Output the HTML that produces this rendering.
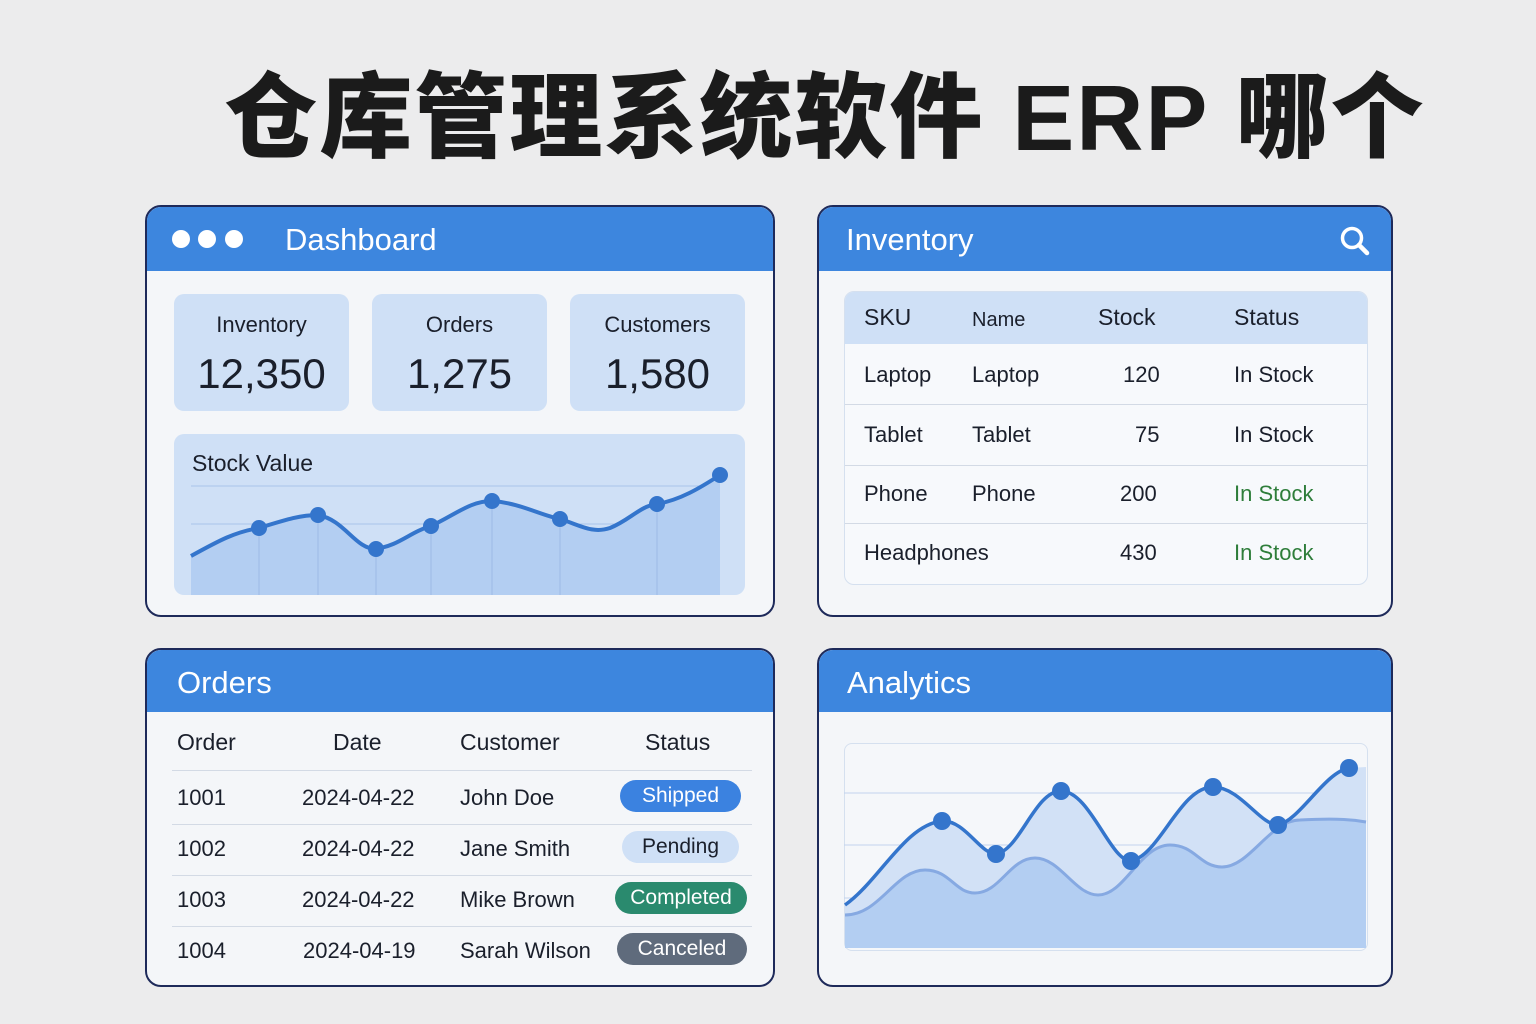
<!DOCTYPE html>
<html><head><meta charset="utf-8"><style>
*{margin:0;padding:0;box-sizing:border-box}
body{width:1536px;height:1024px;background:#ececed;font-family:"Liberation Sans","Noto Sans CJK SC",sans-serif;position:relative;overflow:hidden;color:#1a1f2b}
.abs{position:absolute}
h1{position:absolute;left:0;width:1650px;text-align:center;top:42px;font-size:93px;font-weight:900;color:#1b1b1b;letter-spacing:2px;font-family:"Liberation Sans","Noto Sans CJK SC",sans-serif;white-space:nowrap}
.card{position:absolute;background:#f4f6f9;border:2px solid #1e2a5a;border-radius:16px;overflow:hidden}
.hd{position:absolute;left:0;top:0;right:0;height:64px;background:#3d86de;color:#fff;font-size:31px;line-height:66px}
.t{position:absolute;white-space:nowrap}
.stat{position:absolute;top:294px;width:175px;height:117px;background:#cfe0f6;border-radius:10px;text-align:center}
.stat .l{font-size:22px;margin-top:18px}
.stat .v{font-size:42px;margin-top:12px}
.badge{position:absolute;height:32px;border-radius:16px;color:#fff;font-size:21px;text-align:center;line-height:32px}
.r{font-size:22px}
</style></head><body>
<h1>仓库管理系统软件 ERP 哪个</h1>

<!-- Dashboard -->
<div class="card" style="left:145px;top:205px;width:630px;height:412px">
<div class="hd"><span style="position:absolute;left:138px">Dashboard</span>
<span style="position:absolute;left:25px;top:23px;width:18px;height:18px;border-radius:50%;background:#fff"></span>
<span style="position:absolute;left:51px;top:23px;width:18px;height:18px;border-radius:50%;background:#fff"></span>
<span style="position:absolute;left:78px;top:23px;width:18px;height:18px;border-radius:50%;background:#fff"></span></div>
</div>
<div class="stat" style="left:174px"><div class="l">Inventory</div><div class="v">12,350</div></div>
<div class="stat" style="left:372px"><div class="l">Orders</div><div class="v">1,275</div></div>
<div class="stat" style="left:570px"><div class="l">Customers</div><div class="v">1,580</div></div>
<div class="abs" style="left:174px;top:434px;width:571px;height:161px;background:#cfe0f6;border-radius:10px"></div>
<div class="t" style="left:192px;top:450px;font-size:23px">Stock Value</div>
<svg class="abs" style="left:0;top:0" width="1536" height="1024">
<g stroke="#a9c3ea" stroke-width="1">
<line x1="191" y1="486" x2="720" y2="486"/><line x1="191" y1="524" x2="720" y2="524"/><line x1="191" y1="566" x2="720" y2="566"/>
</g>
<path d="M191,556 C220,540 235,532 259,528 C285,520 300,515 318,515 C345,520 355,549 376,549 C400,545 410,532 431,526 C455,515 470,501 492,501 C520,503 540,515 560,519 C580,525 592,534 610,528 C630,520 640,506 657,504 C680,500 700,488 720,475 L720,595 L191,595 Z" fill="#b3cef2"/>
<g stroke="#9cbbe6" stroke-width="1"><line x1="259" y1="528" x2="259" y2="595"/><line x1="318" y1="515" x2="318" y2="595"/><line x1="376" y1="549" x2="376" y2="595"/><line x1="431" y1="526" x2="431" y2="595"/><line x1="492" y1="501" x2="492" y2="595"/><line x1="560" y1="519" x2="560" y2="595"/><line x1="657" y1="504" x2="657" y2="595"/></g>
<path d="M191,556 C220,540 235,532 259,528 C285,520 300,515 318,515 C345,520 355,549 376,549 C400,545 410,532 431,526 C455,515 470,501 492,501 C520,503 540,515 560,519 C580,525 592,534 610,528 C630,520 640,506 657,504 C680,500 700,488 720,475" fill="none" stroke="#3475cc" stroke-width="4"/>
<g fill="#3475cc"><circle cx="259" cy="528" r="8"/><circle cx="318" cy="515" r="8"/><circle cx="376" cy="549" r="8"/><circle cx="431" cy="526" r="8"/><circle cx="492" cy="501" r="8"/><circle cx="560" cy="519" r="8"/><circle cx="657" cy="504" r="8"/><circle cx="720" cy="475" r="8"/></g>
</svg>

<!-- Inventory -->
<div class="card" style="left:817px;top:205px;width:576px;height:412px">
<div class="hd"><span style="position:absolute;left:27px">Inventory</span>
<svg style="position:absolute;left:520px;top:18px" width="32" height="32"><circle cx="13" cy="13" r="9.5" fill="none" stroke="#fff" stroke-width="3.5"/><line x1="20" y1="20" x2="28" y2="28" stroke="#fff" stroke-width="4.5" stroke-linecap="round"/></svg></div>
<div style="position:absolute;left:25px;top:84px;width:524px;height:294px;background:#f7f9fc;border:1px solid #d5e0ef;border-radius:10px;overflow:hidden">
<div style="height:52px;background:#cfe0f6"></div>
<div style="position:absolute;left:0;right:0;top:112px;border-top:1px solid #d3dae5"></div>
<div style="position:absolute;left:0;right:0;top:173px;border-top:1px solid #d3dae5"></div>
<div style="position:absolute;left:0;right:0;top:231px;border-top:1px solid #d3dae5"></div>
</div></div>
<div class="t r" style="left:864px;top:304px;font-size:23px">SKU</div>
<div class="t" style="left:972px;top:309px;font-size:20px">Name</div>
<div class="t r" style="left:1098px;top:304px;font-size:23px">Stock</div>
<div class="t r" style="left:1234px;top:304px;font-size:23px">Status</div>
<div class="t r" style="left:864px;top:362px">Laptop</div><div class="t r" style="left:972px;top:362px">Laptop</div><div class="t r" style="left:1123px;top:362px">120</div><div class="t r" style="left:1234px;top:362px">In Stock</div>
<div class="t r" style="left:864px;top:422px">Tablet</div><div class="t r" style="left:972px;top:422px">Tablet</div><div class="t r" style="left:1135px;top:422px">75</div><div class="t r" style="left:1234px;top:422px">In Stock</div>
<div class="t r" style="left:864px;top:481px">Phone</div><div class="t r" style="left:972px;top:481px">Phone</div><div class="t r" style="left:1120px;top:481px">200</div><div class="t r" style="left:1234px;top:481px;color:#2e7d3a">In Stock</div>
<div class="t r" style="left:864px;top:540px">Headphones</div><div class="t r" style="left:1120px;top:540px">430</div><div class="t r" style="left:1234px;top:540px;color:#2e7d3a">In Stock</div>

<!-- Orders -->
<div class="card" style="left:145px;top:648px;width:630px;height:339px">
<div class="hd" style="height:62px;line-height:66px"><span style="position:absolute;left:30px">Orders</span></div>
<div style="position:absolute;left:25px;width:580px;top:120px;border-top:1px solid #d3dae5"></div>
<div style="position:absolute;left:25px;width:580px;top:174px;border-top:1px solid #d3dae5"></div>
<div style="position:absolute;left:25px;width:580px;top:225px;border-top:1px solid #d3dae5"></div>
<div style="position:absolute;left:25px;width:580px;top:276px;border-top:1px solid #d3dae5"></div>
</div>
<div class="t r" style="left:177px;top:729px;font-size:23px">Order</div><div class="t r" style="left:333px;top:729px;font-size:23px">Date</div><div class="t r" style="left:460px;top:729px;font-size:23px">Customer</div><div class="t r" style="left:645px;top:729px;font-size:23px">Status</div>
<div class="t r" style="left:177px;top:785px">1001</div><div class="t r" style="left:302px;top:785px">2024-04-22</div><div class="t r" style="left:460px;top:785px">John Doe</div>
<div class="badge" style="left:620px;top:780px;width:121px;background:#3b82e0">Shipped</div>
<div class="t r" style="left:177px;top:836px">1002</div><div class="t r" style="left:302px;top:836px">2024-04-22</div><div class="t r" style="left:460px;top:836px">Jane Smith</div>
<div class="badge" style="left:622px;top:831px;width:117px;background:#cfe0f6;color:#1a1f2b">Pending</div>
<div class="t r" style="left:177px;top:887px">1003</div><div class="t r" style="left:302px;top:887px">2024-04-22</div><div class="t r" style="left:460px;top:887px">Mike Brown</div>
<div class="badge" style="left:615px;top:882px;width:132px;background:#2a8a6e">Completed</div>
<div class="t r" style="left:177px;top:938px">1004</div><div class="t r" style="left:303px;top:938px">2024-04-19</div><div class="t r" style="left:460px;top:938px">Sarah Wilson</div>
<div class="badge" style="left:617px;top:933px;width:130px;background:#5f6b7c">Canceled</div>

<!-- Analytics -->
<div class="card" style="left:817px;top:648px;width:576px;height:339px">
<div class="hd" style="height:62px;line-height:66px"><span style="position:absolute;left:28px">Analytics</span></div>
<div style="position:absolute;left:25px;top:93px;width:524px;height:208px;background:#f5f7fa;border:1px solid #d5e0ef;border-radius:8px"></div>
</div>
<svg class="abs" style="left:0;top:0" width="1536" height="1024">
<g stroke="#c3d3ee" stroke-width="1"><line x1="844" y1="793" x2="1366" y2="793"/><line x1="844" y1="845" x2="1366" y2="845"/><line x1="844" y1="898" x2="1366" y2="898"/></g>
<path d="M845,905 C880,880 905,825 942,821 C965,820 980,854 996,854 C1020,850 1035,791 1061,791 C1090,791 1110,861 1131,861 C1160,855 1180,787 1213,787 C1240,787 1260,825 1278,825 C1300,820 1325,772 1349,768 L1366,767 L1366,948 L845,948 Z" fill="#d2e1f6"/>
<path d="M845,915 C880,915 895,870 925,870 C950,870 955,893 975,893 C1000,893 1010,858 1035,858 C1060,858 1075,895 1098,895 C1125,895 1140,845 1170,845 C1195,845 1200,867 1222,867 C1250,867 1270,820 1300,820 C1340,818 1355,820 1366,822 L1366,948 L845,948 Z" fill="#b3cef2"/>
<path d="M845,915 C880,915 895,870 925,870 C950,870 955,893 975,893 C1000,893 1010,858 1035,858 C1060,858 1075,895 1098,895 C1125,895 1140,845 1170,845 C1195,845 1200,867 1222,867 C1250,867 1270,820 1300,820 C1340,818 1355,820 1366,822" fill="none" stroke="#86a9e2" stroke-width="3"/>
<path d="M845,905 C880,880 905,825 942,821 C965,820 980,854 996,854 C1020,850 1035,791 1061,791 C1090,791 1110,861 1131,861 C1160,855 1180,787 1213,787 C1240,787 1260,825 1278,825 C1300,820 1325,772 1349,768" fill="none" stroke="#3475cc" stroke-width="3.5"/>
<g fill="#3475cc"><circle cx="942" cy="821" r="9"/><circle cx="996" cy="854" r="9"/><circle cx="1061" cy="791" r="9"/><circle cx="1131" cy="861" r="9"/><circle cx="1213" cy="787" r="9"/><circle cx="1278" cy="825" r="9"/><circle cx="1349" cy="768" r="9"/></g>
</svg>
</body></html>
